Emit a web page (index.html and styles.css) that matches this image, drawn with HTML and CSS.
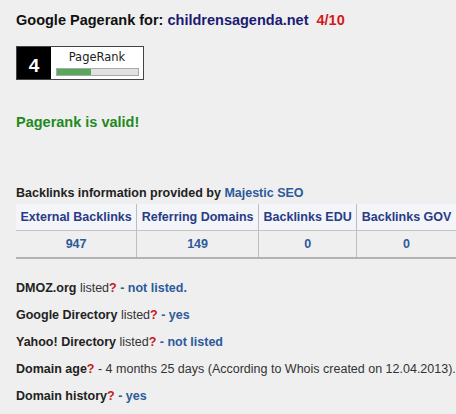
FILE: index.html
```html
<!DOCTYPE html>
<html>
<head>
<meta charset="utf-8">
<link rel="stylesheet" href="styles.css">
</head>
<body>
<div class="page">
  <h1 class="title">Google Pagerank for: <a class="site">childrensagenda.net</a> <span class="score">4/10</span></h1>
  <div class="badge">
    <div class="badge-num">4</div>
    <div class="badge-body">
      <div class="badge-label">PageRank</div>
      <div class="bar"><div class="bar-fill" style="width:42%"></div></div>
    </div>
  </div>
  <p class="valid">Pagerank is valid!</p>
  <p class="provided">Backlinks information provided by <a class="link">Majestic SEO</a></p>
  <table class="bl">
    <tr>
      <th>External Backlinks</th>
      <th>Referring Domains</th>
      <th>Backlinks EDU</th>
      <th>Backlinks GOV</th>
    </tr>
    <tr>
      <td>947</td>
      <td>149</td>
      <td>0</td>
      <td>0</td>
    </tr>
  </table>
  <div class="facts">
    <p class="fact"><b>DMOZ.org</b> listed<span class="q">?</span> <b class="ans">- not listed.</b></p>
    <p class="fact"><b>Google Directory</b> listed<span class="q">?</span> <b class="ans">- yes</b></p>
    <p class="fact"><b>Yahoo! Directory</b> listed<span class="q">?</span> <b class="ans">- not listed</b></p>
    <p class="fact"><b>Domain age</b><span class="q">?</span> - 4 months 25 days (According to Whois created on 12.04.2013).</p>
    <p class="fact"><b>Domain history</b><span class="q">?</span> <b class="ans">- yes</b></p>
  </div>
</div>
</body>
</html>
```

FILE: styles.css
```css
html, body {
  margin: 0;
  padding: 0;
  background: #efefef;
}
body {
  font-family: "Liberation Sans", Arial, sans-serif;
  color: #222;
  overflow: hidden;
}
.page {
  padding: 10px 0 0 16px;
  width: 460px;
}
.title {
  margin: 0;
  font-size: 14.5px;
  line-height: 20px;
  font-weight: bold;
  color: #111;
  white-space: nowrap;
}
.site {
  color: #1b1a72;
}
.score {
  color: #d41a1a;
  margin-left: 4px;
}
.badge {
  margin-top: 16px;
  display: flex;
  width: 126px;
  height: 32px;
  border: 1px solid #444;
  background: #fff;
}
.badge-num {
  width: 34px;
  background: #000;
  color: #fff;
  font-weight: bold;
  font-size: 19px;
  display: flex;
  align-items: center;
  justify-content: center;
  padding-top: 6px;
  box-sizing: border-box;
}
.badge-body {
  flex: 1;
  display: flex;
  flex-direction: column;
  align-items: center;
  padding-top: 4px;
}
.badge-label {
  font-family: "DejaVu Sans", Verdana, sans-serif;
  font-size: 11.5px;
  line-height: 13px;
  color: #222;
}
.bar {
  margin-top: 4px;
  width: 81px;
  height: 6px;
  border: 1px solid #aaa;
  background: #e2e2e2;
}
.bar-fill {
  height: 100%;
  background: #58a85c;
}
.valid {
  margin: 35px 0 0;
  font-size: 14.5px;
  line-height: 15px;
  font-weight: bold;
  color: #1f8a1f;
}
.provided {
  margin: 56px 0 0;
  font-size: 12.5px;
  line-height: 14px;
  font-weight: bold;
  color: #222;
}
.link {
  color: #2c5a9a;
}
.bl {
  margin-top: 4px;
  border-collapse: collapse;
  font-size: 12.5px;
  font-weight: bold;
  white-space: nowrap;
}
.bl th, .bl td {
  padding: 0 4.5px;
  height: 26px;
  text-align: center;
  border-left: 1px solid #bdbdbd;
}
.bl th:first-child, .bl td:first-child {
  border-left: none;
}
.bl th {
  background: #f3f5f9;
  color: #2a3b86;
  border-bottom: 1px solid #c4c4c4;
}
.bl td {
  color: #2c5a9a;
  border-bottom: 2px solid #b3b3b3;
  height: 26px;
}
.facts {
  margin-top: 22px;
}
.fact {
  margin: 0 0 12px;
  font-size: 12.5px;
  line-height: 15px;
  color: #333;
  white-space: nowrap;
}
.fact b {
  color: #222;
}
.fact .ans {
  color: #2c5a9a;
}
.q {
  color: #c8161b;
  font-weight: bold;
}
```
